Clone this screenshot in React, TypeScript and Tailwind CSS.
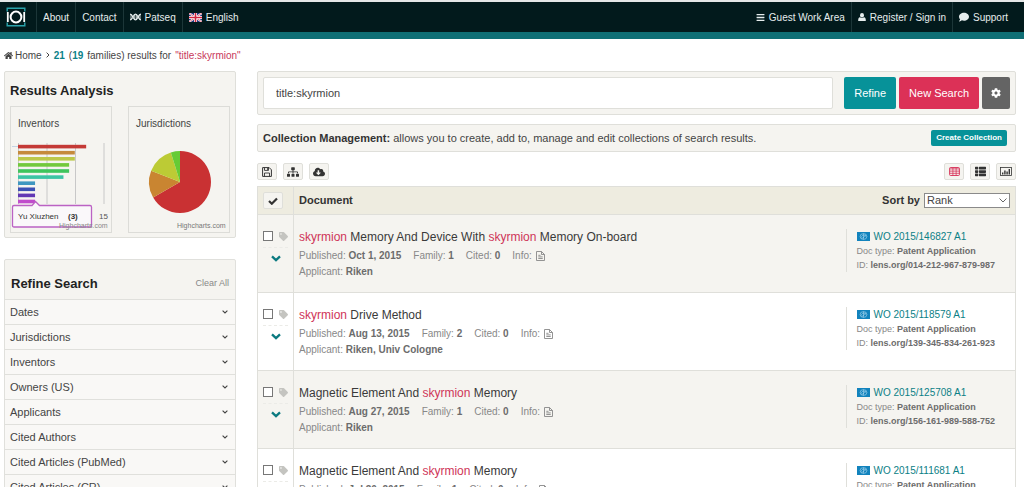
import { Fragment, FunctionComponent, ReactNode } from 'react';
import {
    FaBars,
    FaCloudDownloadAlt,
    FaCog,
    FaComment,
    FaHome,
    FaSitemap,
    FaTag,
    FaThList,
} from 'react-icons/fa';

type Patent = {
    title: string;
    published: string;
    family: number;
    cited: number;
    applicant: string;
    number: string;
    lensId: string;
};

const patents: Patent[] = [
    {
        title: 'skyrmion Memory And Device With skyrmion Memory On-board',
        published: 'Oct 1, 2015',
        family: 1,
        cited: 0,
        applicant: 'Riken',
        number: 'WO 2015/146827 A1',
        lensId: '014-212-967-879-987',
    },
    {
        title: 'skyrmion Drive Method',
        published: 'Aug 13, 2015',
        family: 2,
        cited: 0,
        applicant: 'Riken, Univ Cologne',
        number: 'WO 2015/118579 A1',
        lensId: '139-345-834-261-923',
    },
    {
        title: 'Magnetic Element And skyrmion Memory',
        published: 'Aug 27, 2015',
        family: 1,
        cited: 0,
        applicant: 'Riken',
        number: 'WO 2015/125708 A1',
        lensId: '156-161-989-588-752',
    },
    {
        title: 'Magnetic Element And skyrmion Memory',
        published: 'Jul 30, 2015',
        family: 1,
        cited: 0,
        applicant: '',
        number: 'WO 2015/111681 A1',
        lensId: '',
    },
];

const filters = [
    'Dates',
    'Jurisdictions',
    'Inventors',
    'Owners (US)',
    'Applicants',
    'Cited Authors',
    'Cited Articles (PubMed)',
    'Cited Articles (CR)',
];

const inventorBars = [
    { count: 12, color: '#c43a36' },
    { count: 10, color: '#c58a3c' },
    { count: 10, color: '#bcc84a' },
    { count: 9, color: '#72c93c' },
    { count: 9, color: '#3fc45c' },
    { count: 8, color: '#3cc4a4' },
    { count: 3, color: '#3f97c0' },
    { count: 3, color: '#3c50b4' },
    { count: 3, color: '#6238b4' },
    { count: 3, color: '#c04ccc' },
];

const LensLogo = () => (
    <svg viewBox="0 0 20 20" className="size-5" fill="none">
        <path
            d="M1.200 4.500V1.200h17.600v3.300M1.200 15.500v3.300h17.600v-3.300"
            stroke="#2aa3ab"
            strokeWidth="1.4"
        />
        <path d="M1.800 5v10M18.200 5v10" stroke="#fff" strokeWidth="1.8" />
        <circle cx="10" cy="10" r="5.4" stroke="#fff" strokeWidth="2" />
    </svg>
);

const DnaIcon = () => (
    <svg
        viewBox="0 0 11 8"
        className="h-2 w-[11px]"
        fill="none"
        stroke="#e6eded"
        strokeWidth="1.3"
    >
        <path d="M0 1.2C3 1.2 3 6.8 5.5 6.8S8 1.2 11 1.2M0 6.8C3 6.8 3 1.2 5.5 1.2S8 6.8 11 6.8" />
        <path d="M1 2v4M4.700 1.500v5M6.300 1.500v5M10 2v4" strokeWidth="0.8" />
    </svg>
);

const UkFlag = () => (
    <svg viewBox="0 0 13 9" className="h-[9px] w-[13px]">
        <path fill="#26377e" d="M0 0h13v9H0z" />
        <path d="M0 0l13 9M13 0L0 9" stroke="#fff" strokeWidth="1.9" />
        <path d="M0 0l13 9M13 0L0 9" stroke="#d0344a" strokeWidth="0.7" />
        <path d="M6.5 0v9M0 4.5h13" stroke="#fff" strokeWidth="3" />
        <path d="M6.5 0v9M0 4.5h13" stroke="#d0243e" strokeWidth="1.6" />
    </svg>
);

const WipoFlag = () => (
    <svg viewBox="0 0 13 9" className="h-[9px] w-[13px] shrink-0">
        <path fill="#1283bd" d="M0 0h13v9H0z" />
        <g fill="none" stroke="#a9d6ee" strokeWidth="0.6">
            <ellipse cx="6.500" cy="4.500" rx="3.400" ry="2.900" />
            <path d="M4 5.5c1-3 4-3 5-1M4.3 6.3c2-.2 3.6-1.4 4.3-3.4M6.5 1.6v5.8" />
        </g>
    </svg>
);

const UserIcon = () => (
    <svg viewBox="0 0 8 8" className="size-2" fill="currentColor">
        <ellipse cx="4" cy="2.300" rx="2" ry="2.300" />
        <path d="M.2 8Q0 4.600 2 4.300q2 1.300 4 0Q8 4.600 7.800 8z" />
    </svg>
);

const SaveIcon = () => (
    <svg
        viewBox="0 0 10 10"
        className="size-[10px]"
        fill="none"
        stroke="currentColor"
    >
        <path d="M.6.6h6.600l2.200 2.200v6.600H.6z" strokeWidth="1" />
        <path d="M2.500.6v2.800h4V.6M2.500 9.400V6h5v3.400" strokeWidth="0.9" />
        <path d="M5.500 1v2" strokeWidth="0.8" />
    </svg>
);

const CheckIcon = () => (
    <svg viewBox="0 0 10 8" className="h-2 w-[10px]" fill="none">
        <path
            d="M1 4l2.800 2.700L9 1.400"
            stroke="currentColor"
            strokeWidth="2.200"
        />
    </svg>
);

const ChevronIcon = () => (
    <svg viewBox="0 0 10 7" className="h-[7px] w-[10px]" fill="none">
        <path
            d="M1 1.300l4 3.800 4-3.800"
            stroke="currentColor"
            strokeWidth="2.300"
        />
    </svg>
);

const AngleIcon = () => (
    <svg viewBox="0 0 6 4" className="h-1 w-[6px]" fill="none">
        <path d="M.6.6L3 3 5.400.6" stroke="currentColor" strokeWidth="1.1" />
    </svg>
);

const DocumentIcon = () => (
    <svg
        viewBox="0 0 9 10"
        className="h-[10px] w-[9px]"
        fill="none"
        stroke="currentColor"
        strokeWidth="0.9"
    >
        <path d="M.5.5h5l3 3v6h-8zM5.500.5v3h3" />
        <path d="M2.300 4.300h2.200M2.300 5.900h4.400M2.300 7.500h4.400" />
    </svg>
);

const GridIcon = () => (
    <svg viewBox="0 0 12 10" className="h-[9px] w-[11px]" fill="none">
        <rect
            x="0.6"
            y="0.6"
            width="10.8"
            height="8.8"
            rx="0.8"
            stroke="currentColor"
            strokeWidth="1.1"
        />
        <path
            d="M.6 2.1h10.8M.6 4.6h10.8M.6 7h10.8M4.2 1v8.6M7.8 1v8.6"
            stroke="currentColor"
            strokeWidth="0.9"
        />
    </svg>
);

const ChartIcon = () => (
    <svg viewBox="0 0 12 9" className="h-[9px] w-3" fill="none">
        <rect
            x="0.5"
            y="0.5"
            width="11"
            height="8"
            stroke="currentColor"
            strokeWidth="0.8"
        />
        <path
            d="M2.700 7.500V5.500M4.900 7.500V3.500M7.100 7.500V4.500M9.300 7.500V2"
            stroke="currentColor"
            strokeWidth="1.400"
        />
    </svg>
);

const NavLink: FunctionComponent<{ children: ReactNode; last?: boolean }> = ({
    children,
    last,
}) => (
    <a
        href="#"
        className={`flex items-center gap-1 whitespace-nowrap px-[6px] text-[10px] text-[#e6eded] ${
            last ? '' : 'border-r border-[#1c3638]'
        }`}
    >
        {children}
    </a>
);

const Header = () => (
    <header className="flex h-[39px] justify-between border-t-2 border-b-[7px] border-t-[#e4e7e7] border-b-[#0f6f75] bg-[#021a1c]">
        <nav className="flex">
            <a
                href="#"
                aria-label="Lens"
                className="flex w-[37px] items-center justify-center border-r border-[#1c3638] pr-1"
            >
                <LensLogo />
            </a>
            <NavLink>About</NavLink>
            <NavLink>Contact</NavLink>
            <NavLink>
                <DnaIcon />
                Patseq
            </NavLink>
            <NavLink last>
                <UkFlag />
                English
            </NavLink>
        </nav>
        <nav className="flex pr-[10px]">
            <NavLink>
                <FaBars className="size-[9px]" />
                Guest Work Area
            </NavLink>
            <NavLink>
                <UserIcon />
                Register / Sign in
            </NavLink>
            <NavLink last>
                <FaComment className="size-[10px]" />
                Support
            </NavLink>
        </nav>
    </header>
);

const Breadcrumb = () => (
    <div className="flex h-8 items-center px-1 text-[10px] text-[#444]">
        <FaHome className="mr-[2px] size-[9px]" />
        <a href="#">Home</a>
        <svg
            viewBox="0 0 4 6"
            className="mx-1 h-[6px] w-1"
            fill="none"
            stroke="currentColor"
        >
            <path d="M.6.6L3 3 .6 5.400" />
        </svg>
        <b className="mr-1 text-[#0b8289]">21</b>
        <span>
            (<b className="text-[#0b8289]">19</b>
        </span>
        <span className="mx-1">families) results for</span>
        <span className="text-[#c8385a]">"title:skyrmion"</span>
    </div>
);

const InventorsChart = () => (
    <svg viewBox="0 0 100 92" className="block w-full">
        <path
            d="M7.5 3v61M36 3v61M64.500 3v61M93 3v61"
            stroke="#c8c8c8"
            strokeWidth="1"
        />
        <path d="M1 6.500h6" stroke="#c4d4e4" strokeWidth="1" />
        {inventorBars.map((bar, index) => (
            <rect
                key={index}
                x="7"
                y={4.8 + index * 6.1}
                width={bar.count * 5.68}
                height="3.6"
                fill={bar.color}
            />
        ))}
        <text x="88" y="79" fontSize="8" fill="#555">
            15
        </text>
        <path
            d="M3 65.500h18l3.500-4 4 4H79q1.500 0 1.500 1.500v18.500q0 1.500-1.500 1.500H3q-1.500 0-1.500-1.500V67q0-1.500 1.500-1.500z"
            fill="#faf8fa"
            stroke="#bb62c4"
            strokeWidth="1.3"
        />
        <text x="7" y="79" fontSize="8" fill="#333">
            Yu Xiuzhen
        </text>
        <text x="57" y="79" fontSize="8" fontWeight="bold" fill="#333">
            (3)
        </text>
        <text x="48" y="88" fontSize="7" fill="#888">
            Highcharts.com
        </text>
    </svg>
);

const JurisdictionsChart = () => (
    <svg viewBox="0 0 100 92" className="block w-full">
        <path d="M51 42V11a31 31 0 1 1-26.850 46.500z" fill="#c93133" />
        <path d="M51 42L24.150 57.500A31 31 0 0 1 22.140 30.670z" fill="#c98531" />
        <path d="M51 42L22.140 30.670A31 31 0 0 1 41.860 12.380z" fill="#bccb35" />
        <path d="M51 42L41.860 12.380A31 31 0 0 1 51 11z" fill="#66cb35" />
        <text x="48" y="88" fontSize="7" fill="#777">
            Highcharts.com
        </text>
    </svg>
);

const ResultsAnalysis = () => (
    <section className="rounded-xs border border-[#dfdfda] bg-[#f5f4f0] px-[5px] pb-1">
        <h2 className="flex h-[34px] items-center pt-1 text-[13px] font-bold text-[#222]">
            Results Analysis
        </h2>
        <div className="flex gap-4">
            <div className="flex-1 border border-[#dcdcd8]">
                <h3 className="flex h-[33px] items-center px-[7px] text-[10px] text-[#444]">
                    Inventors
                </h3>
                <InventorsChart />
            </div>
            <div className="flex-1 border border-[#dcdcd8]">
                <h3 className="flex h-[33px] items-center px-[7px] text-[10px] text-[#444]">
                    Jurisdictions
                </h3>
                <JurisdictionsChart />
            </div>
        </div>
    </section>
);

const RefineSearch = () => (
    <section className="rounded-xs border border-[#e0e0dc] bg-[#f5f4f0]">
        <div className="flex h-[39px] items-center justify-between px-[6px] pt-2">
            <h2 className="text-[13px] font-bold text-[#222]">Refine Search</h2>
            <button type="button" className="text-[9px] text-[#888]">
                Clear All
            </button>
        </div>
        {filters.map((filter) => (
            <button
                key={filter}
                type="button"
                className="flex h-[25px] w-full items-center justify-between border-t border-[#e0e0dc] bg-[#f9f8f6] pr-[7px] pl-[5px] text-[11px] text-[#444]"
            >
                {filter}
                <AngleIcon />
            </button>
        ))}
    </section>
);

const SearchPanel = () => (
    <form
        className="flex gap-[3px] rounded-xs border border-[#dfdfda] bg-[#f5f4f0] p-[5px]"
        onSubmit={(e) => e.preventDefault()}
    >
        <input
            type="text"
            aria-label="Search query"
            defaultValue="title:skyrmion"
            className="mr-2 h-8 min-w-0 flex-1 rounded-xs border border-[#dfdfda] bg-white px-3 text-[11px] text-[#444]"
        />
        <button
            type="submit"
            className="rounded-xs bg-[#079299] px-[10px] text-[11px] text-white"
        >
            Refine
        </button>
        <button
            type="button"
            className="rounded-xs bg-[#dc3157] px-[10px] text-[11px] text-white"
        >
            New Search
        </button>
        <button
            type="button"
            aria-label="Settings"
            className="flex w-7 items-center justify-center rounded-xs bg-[#646464] text-white"
        >
            <FaCog className="size-[10px]" />
        </button>
    </form>
);

const CollectionPanel = () => (
    <div className="flex h-7 items-center justify-between rounded-xs border border-[#dfdfda] bg-[#f5f4f0] pr-2 pl-[5px] text-[11px] text-[#444]">
        <p>
            <b className="text-[#333]">Collection Management:</b> allows you to
            create, add to, manage and edit collections of search results.
        </p>
        <button
            type="button"
            className="h-4 rounded-xs bg-[#079299] px-[5px] text-[8px] font-bold text-white"
        >
            Create Collection
        </button>
    </div>
);

const ToolButton: FunctionComponent<{
    label: string;
    children: ReactNode;
    active?: boolean;
}> = ({ label, children, active }) => (
    <button
        type="button"
        aria-label={label}
        className={`flex h-[17px] w-5 items-center justify-center rounded-xs border border-[#dfdfda] bg-[#f5f4f0] ${
            active ? 'text-[#d8375c]' : 'text-[#333]'
        }`}
    >
        {children}
    </button>
);

const Toolbar = () => (
    <div className="flex justify-between">
        <div className="flex gap-[6px]">
            <ToolButton label="Save">
                <SaveIcon />
            </ToolButton>
            <ToolButton label="Families">
                <FaSitemap className="size-3" />
            </ToolButton>
            <ToolButton label="Download">
                <FaCloudDownloadAlt className="size-3" />
            </ToolButton>
        </div>
        <div className="flex gap-[6px]">
            <ToolButton label="Table view" active>
                <GridIcon />
            </ToolButton>
            <ToolButton label="List view">
                <FaThList className="size-[11px]" />
            </ToolButton>
            <ToolButton label="Chart view">
                <ChartIcon />
            </ToolButton>
        </div>
    </div>
);

const Highlighted: FunctionComponent<{ text: string }> = ({ text }) => (
    <>
        {text.split('skyrmion').map((part, index) => (
            <Fragment key={index}>
                {index > 0 && <span className="text-[#cf3458]">skyrmion</span>}
                {part}
            </Fragment>
        ))}
    </>
);

const PatentRow: FunctionComponent<{ patent: Patent }> = ({ patent }) => (
    <tr className="h-[78px] border border-[#dfdfda] align-top odd:bg-[#f5f4f0] even:bg-white">
        <td className="border-r border-[#dfdfda] px-[5px] pt-4">
            <div className="flex items-center justify-between border-b border-dashed border-[#ebebe7] pb-[6px]">
                <input
                    type="checkbox"
                    aria-label={`Select ${patent.number}`}
                    className="size-[10px] appearance-none border border-[#777] bg-white"
                />
                <FaTag className="size-[9px] text-[#c4c4c0]" />
            </div>
            <button
                type="button"
                aria-label="Show details"
                className="flex w-full justify-center pt-[7px] text-[#0b7a80]"
            >
                <ChevronIcon />
            </button>
        </td>
        <td className="pt-[13px] pl-[5px] text-[10px] leading-4 text-[#888]">
            <h3 className="text-[12px] leading-[18px] text-[#3a3a3a]">
                <a href="#">
                    <Highlighted text={patent.title} />
                </a>
            </h3>
            <div className="flex gap-3 pt-[2px]">
                <span>
                    Published:{' '}
                    <b className="text-[#6c6c6c]">{patent.published}</b>
                </span>
                <span>
                    Family: <b className="text-[#6c6c6c]">{patent.family}</b>
                </span>
                <span>
                    Cited: <b className="text-[#6c6c6c]">{patent.cited}</b>
                </span>
                <span className="flex items-center gap-1">
                    Info: <DocumentIcon />
                </span>
            </div>
            {patent.applicant && (
                <div>
                    Applicant:{' '}
                    <b className="text-[#6c6c6c]">{patent.applicant}</b>
                </div>
            )}
        </td>
        <td className="pt-[14px] pr-[5px] text-[9px] leading-[14px] text-[#888]">
            <div className="border-l border-[#dfdfda] pl-[10px]">
                <a
                    href="#"
                    className="flex items-center gap-1 text-[10px] leading-[15px] text-[#0b8086]"
                >
                    <WipoFlag />
                    {patent.number}
                </a>
                <p>
                    Doc type:{' '}
                    <b className="text-[#6c6c6c]">Patent Application</b>
                </p>
                {patent.lensId && (
                    <p>
                        ID:{' '}
                        <b className="text-[#6c6c6c]">
                            lens.org/{patent.lensId}
                        </b>
                    </p>
                )}
            </div>
        </td>
    </tr>
);

const ResultsTable = () => (
    <table className="w-full table-fixed border-collapse">
        <colgroup>
            <col className="w-9" />
            <col />
            <col className="w-[170px]" />
        </colgroup>
        <thead>
            <tr className="h-7 border border-[#dfdfda] bg-[#eeece0]">
                <th className="border-r border-[#dfdfda] px-[5px]">
                    <ToolButton label="Select all">
                        <CheckIcon />
                    </ToolButton>
                </th>
                <th className="pl-[5px] text-left text-[11px] font-bold text-[#333]">
                    Document
                </th>
                <th className="pr-[5px]">
                    <div className="flex items-center justify-end gap-1">
                        <label
                            htmlFor="sort"
                            className="text-[11px] whitespace-nowrap text-[#333]"
                        >
                            Sort by
                        </label>
                        <div className="relative w-[86px]">
                            <select
                                id="sort"
                                className="block h-[15px] w-full appearance-none border border-[#8a8a8a] bg-white pl-[2px] text-[11px] leading-[13px] font-normal text-[#444]"
                            >
                                <option>Rank</option>
                            </select>
                            <svg
                                viewBox="0 0 8 5"
                                className="pointer-events-none absolute top-[5px] right-[3px] h-[5px] w-2"
                                fill="none"
                                stroke="#666"
                            >
                                <path d="M.5.5L4 4 7.500.5" />
                            </svg>
                        </div>
                    </div>
                </th>
            </tr>
        </thead>
        <tbody>
            {patents.map((patent) => (
                <PatentRow key={patent.number} patent={patent} />
            ))}
        </tbody>
    </table>
);

const App: FunctionComponent = () => {
    return (
        <div className="min-h-screen bg-white font-['Liberation_Sans',Arial,sans-serif]">
            <Header />
            <Breadcrumb />
            <div className="flex gap-[21px] pr-2 pl-1">
                <aside className="flex w-[232px] shrink-0 flex-col gap-[21px]">
                    <ResultsAnalysis />
                    <RefineSearch />
                </aside>
                <main className="min-w-0 flex-1">
                    <SearchPanel />
                    <div className="mt-[9px] mb-[11px]">
                        <CollectionPanel />
                    </div>
                    <div className="mb-[6px]">
                        <Toolbar />
                    </div>
                    <ResultsTable />
                </main>
            </div>
        </div>
    );
};

export default App;
